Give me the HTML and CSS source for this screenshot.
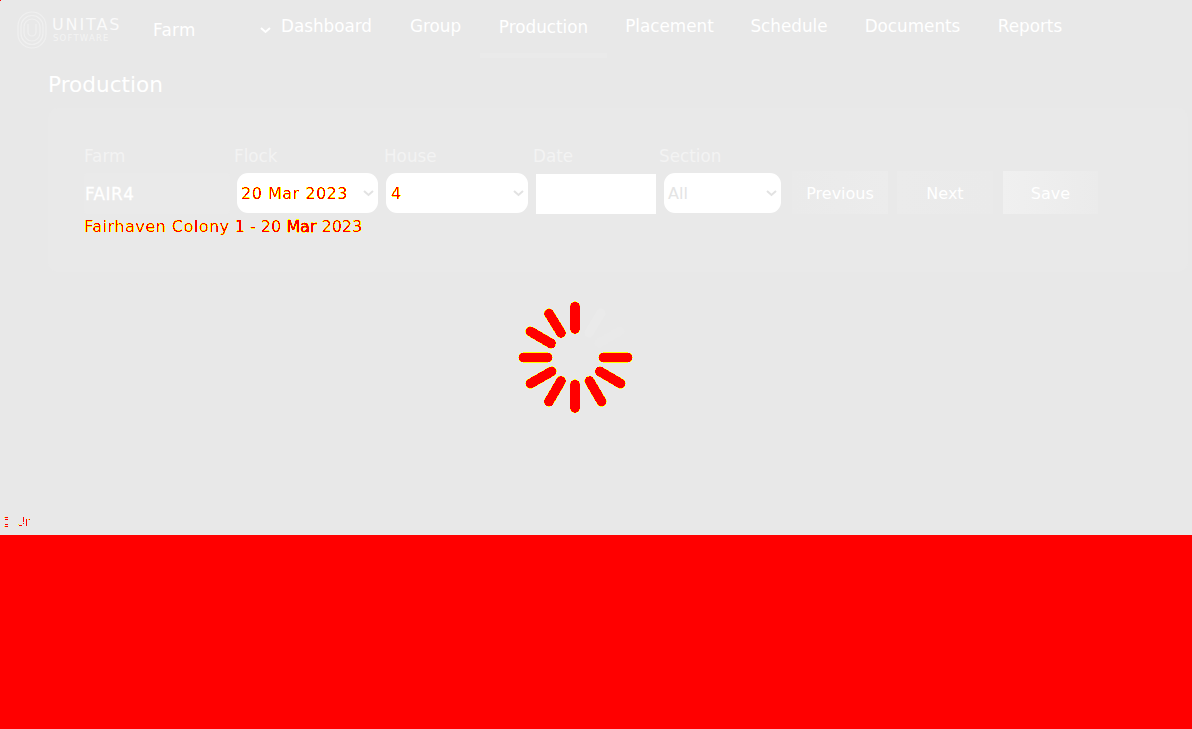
FILE: index.html
```html
<!DOCTYPE html>
<html lang="en">
<head>
<meta charset="utf-8">
<title>Production</title>
<link rel="stylesheet" href="styles.css">
</head>
<body>
<svg class="defs" width="0" height="0" aria-hidden="true">
  <filter id="fringe" color-interpolation-filters="sRGB">
    <feColorMatrix type="matrix" values="0 0 0 0 1  0 0 0 -20 13  0 0 0 0 0  0 0 0 20 -2.5"/>
  </filter>
</svg>
<div class="page">
  <header class="topbar">
    <div class="brand">
      <svg class="emblem" width="30" height="38" viewBox="0 0 30 38">
        <rect x="1" y="1" width="28" height="36" rx="14"/>
        <rect x="4" y="4.5" width="22" height="29" rx="11"/>
        <rect x="7" y="8" width="16" height="22" rx="8"/>
        <path d="M11 13v8a4 4 0 0 0 8 0v-8"/>
      </svg>
      <div class="wordmark"><span class="brand-name">UNITAS</span><span class="brand-sub">SOFTWARE</span></div>
    </div>
    <div class="scope"><span>Farm</span><svg width="11" height="7" viewBox="0 0 11 7"><path d="M1 1l4.5 4L10 1"/></svg></div>
    <nav class="nav">
      <a class="link dashboard">Dashboard</a>
      <a class="link group">Group</a>
      <a class="link production active">Production</a>
      <a class="link placement">Placement</a>
      <a class="link schedule">Schedule</a>
      <a class="link documents">Documents</a>
      <a class="link reports">Reports</a>
    </nav>
  </header>
  <h1 class="title">Production</h1>
  <section class="card">
    <div class="fields">
      <div class="field farm"><label>Farm</label><div class="box readonly">FAIR4</div></div>
      <div class="field flock"><label>Flock</label><div class="box select"><span class="hot wide">20 Mar 2023</span><svg width="11" height="7" viewBox="0 0 11 7"><path d="M1 1l4.5 4L10 1"/></svg></div></div>
      <div class="field house"><label>House</label><div class="box select"><span class="hot wide">4</span><svg width="11" height="7" viewBox="0 0 11 7"><path d="M1 1l4.5 4L10 1"/></svg></div></div>
      <div class="field date"><label>Date</label><div class="box input"></div></div>
      <div class="field section"><label>Section</label><div class="box select"><span class="faint">All</span><svg width="11" height="7" viewBox="0 0 11 7"><path d="M1 1l4.5 4L10 1"/></svg></div></div>
      <div class="buttons">
        <div class="button">Previous</div>
        <div class="button">Next</div>
        <div class="button save">Save</div>
      </div>
    </div>
    <p class="summary"><span class="hot"><span class="wide">Fairhaven Colony</span> 1 - 20 <span class="heavy">Mar</span> 2023</span></p>
  </section>
  <svg class="spinner" width="120" height="120" viewBox="-60 -60 120 120">
    <g class="spokes">
      <path d="M0-50.5V-28"/>
      <path d="M28.500 .5H52.500"/>
      <path d="M25 14.500L45.500 26.500"/>
      <path d="M14.500 24L26.500 44.500"/>
      <path d="M0 27.500V51"/>
      <path d="M-14 24L-26 44.500"/>
      <path d="M-23.500 14.500L-44.500 26.500"/>
      <path d="M-27.500 .5H-51.500"/>
      <path d="M-24-13.500L-44.500-25.500"/>
      <path d="M-14-24L-26-43.500"/>
    </g>
    <path class="ghost" d="M14-24L26-44"/>
    <path class="ghost dim" d="M24-14L45-26"/>
  </svg>
  <svg class="status" width="40" height="14" viewBox="0 0 40 14" shape-rendering="crispEdges">
    <path class="red" d="M5 1h3v1h-3zM5 3h3v1h-3zM5 8h3v1h-3zM5 10h3v1h-3zM23 1h1v5h-1zM23 7h1v1h-1zM19 9h3v1h-3zM26 3h1v7h-1zM29 3h1v1h-1z"/>
    <path class="yellow" d="M4 1h1v1h-1zM4 10h1v1h-1zM18 8h1v1h-1zM28 3h1v1h-1z"/>
  </svg>
</div>
<div class="pixel"></div>
</body>
</html>
```
FILE: styles.css
```css
* { box-sizing: border-box; }
body {
  margin: 0;
  height: 729px;
  overflow: hidden;
  background: #f00;
  color: #fff;
  font: 16.8px/20px "DejaVu Sans", Verdana, sans-serif;
}
.defs { position: absolute; }
.pixel { position: absolute; top: 0; left: 0; width: 1px; height: 1px; background: #f00; }
.page { height: 535px; background: #e8e8e8; display: flex; flex-direction: column; }
.topbar { display: flex; height: 58px; flex: none; }
.brand { display: flex; width: 153px; padding: 11px 0 0 17px; gap: 5px; }
.emblem { fill: none; stroke: #f0f0f0; stroke-width: 1.2; flex: none; }
.wordmark { display: flex; flex-direction: column; padding-top: 4px; }
.brand-name { font: 16px/19px "DejaVu Sans", sans-serif; letter-spacing: 1.9px; color: #fafafa; }
.brand-sub { font: 8.5px/9px "DejaVu Sans", sans-serif; letter-spacing: 1.2px; color: #f4f4f4; padding-left: 1px; }
.scope { display: flex; align-items: center; justify-content: space-between; width: 118px; height: 60px; }
.scope span { letter-spacing: 0.3px; }
.scope svg, .select svg { fill: none; stroke: #fff; stroke-width: 2; }
.nav { display: flex; margin-left: -9px; }
.link { height: 58px; padding-top: 16px; text-align: center; white-space: nowrap; }
.dashboard { width: 129px; }
.group { width: 89px; }
.production { width: 127px; }
.placement { width: 125px; }
.schedule { width: 114px; }
.documents { width: 133px; }
.reports { width: 102px; }
.active { padding-top: 17px; border-bottom: 5px solid #eaeaea; }
.title { margin: 11px 0 0 48px; height: 30px; font-size: 21.6px; line-height: 31px; font-weight: 400; }
.card { margin: 9px 0 0 48px; height: 164px; padding: 38px 0 0 36px; border-radius: 10px; background: #e9e9e9; width: 1140px; }
.fields { display: flex; height: 68px; }
.field { display: flex; flex-direction: column; gap: 7px; }
.field label { color: #f3f3f3; height: 20px; white-space: nowrap; }
.farm { width: 150px; }
.flock { width: 150px; }
.house { width: 149px; }
.date { width: 126px; }
.section { width: 133px; }
.box { display: flex; align-items: center; height: 40px; }
.readonly { width: 146px; height: 41px; padding-left: 1px; background: #eaeaea; border-radius: 4px; letter-spacing: 0.5px; -webkit-text-stroke: 0.3px #fff; }
.select { width: 141px; margin-left: 3px; padding: 0 4px 0 4px; justify-content: space-between; border-radius: 11px; background: #fff; }
.house .select { width: 142px; margin-left: 2px; padding-left: 5px; }
.section .select { width: 117px; margin-left: 5px; }
.select svg { stroke: #e2e2e2; }
.faint { color: #e4e4e4; font-size: 16px; padding-top: 1px; }
.input { width: 120px; margin: 1px 0 0 3px; background: #fff; }
.buttons { display: flex; padding-top: 25px; font-size: 16px; }
.button { width: 96px; height: 43px; margin-right: 9px; line-height: 45px; text-align: center; background: linear-gradient(90deg, #eaeaea, #ececec); }
.button + .button { background: linear-gradient(90deg, #ebebeb, #eaeaea); }
.button.save { width: 95px; margin: 0 0 0 1px; background: linear-gradient(90deg, #f0f0f0, #ebebeb); }
.hot { color: #000; font-size: 16px; line-height: 22px; filter: url(#fringe); white-space: nowrap; display: inline-block; }
.select .hot { padding-top: 1px; }
.wide { letter-spacing: 0.5px; }
.summary { margin: 2px 0 0; height: 20px; }
.heavy { -webkit-text-stroke: 0.5px #000; }
.spinner { margin: 25px 0 0 515px; flex: none; }
.spokes { stroke: #000; stroke-width: 9.6; stroke-linecap: round; fill: none; filter: url(#fringe); }
.ghost { stroke: #eaeaea; stroke-width: 9; stroke-linecap: round; fill: none; }
.dim { stroke: #e9e9e9; }
.status { margin-top: 99px; flex: none; }
.red { fill: #f00; }
.yellow { fill: #ff0; }
```
